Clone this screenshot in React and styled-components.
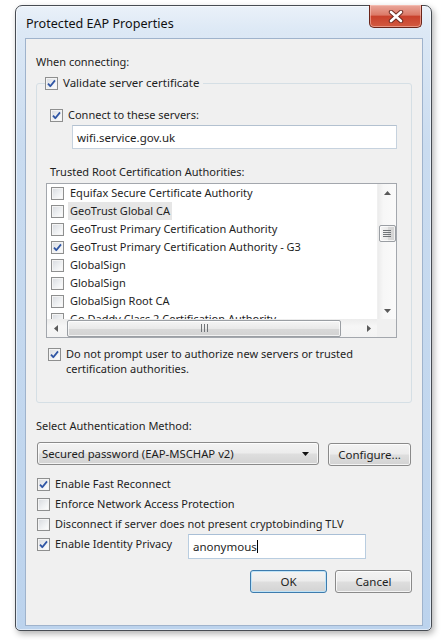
import React from "react";
import styled, { createGlobalStyle } from "styled-components";

const Global = createGlobalStyle`
  html, body { margin: 0; padding: 0; background: #ffffff; }
  body { font-family: "Noto Sans", "Open Sans", sans-serif; font-size: 11px; color: #1e1e1e; }
  * { box-sizing: border-box; }
`;

const Page = styled.div`
  width: 448px;
  height: 640px;
  padding: 5px 0 0 15px;
  overflow: hidden;
`;

const Window = styled.div`
  width: 417px;
  height: 626px;
  border: 1px solid #474c53;
  border-radius: 7px 7px 5px 5px;
  background: linear-gradient(180deg, #eaf1f9 0px, #dce8f5 26px, #cadcf0 140px, #bcd3ed 100%);
  box-shadow: inset 0 0 0 1px rgba(255, 255, 255, 0.55), 2px 3px 6px rgba(0, 0, 0, 0.3);
  display: flex;
  flex-direction: column;
  padding: 0 8px 4px 9px;
`;

const TitleBar = styled.div`
  height: 32px;
  display: flex;
  justify-content: space-between;
  align-items: flex-start;
`;

const Title = styled.div`
  padding: 10px 0 0 1px;
  font-size: 12.6px;
  line-height: 16px;
  color: #111;
`;

const CloseButton = styled.div`
  width: 53px;
  height: 23px;
  margin: -1px 1px 0 0;
  border: 1px solid #6a2419;
  border-top: none;
  border-radius: 0 0 5px 5px;
  background: linear-gradient(180deg, #eaa89c 0%, #dc7a68 45%, #c9412c 52%, #d25a40 100%);
  box-shadow: inset 0 0 0 1px rgba(255, 210, 200, 0.5);
  display: flex;
  align-items: center;
  justify-content: center;
`;

const Client = styled.div`
  flex: 1;
  border: 1px solid #9fb3cc;
  background: #f0f0f0;
  padding: 15px 10px 0 10px;
  display: flex;
  flex-direction: column;
`;

const Label = styled.div`
  line-height: 16px;
  margin: ${(p) => p.$m || "0"};
  white-space: nowrap;
`;

const Group = styled.fieldset`
  margin: 5px 0 0 0;
  border: 1px solid #d5dfe5;
  border-radius: 3px;
  padding: 0 14px 26px 8px;
  min-width: 0;
  display: flex;
  flex-direction: column;
  align-items: flex-start;
`;

const Legend = styled.legend`
  padding: 0 4px 0 0;
  line-height: 16px;
`;

const CheckRow = styled.label`
  display: flex;
  align-items: ${(p) => (p.$top ? "flex-start" : "center")};
  gap: 5px;
  height: ${(p) => (p.$h ? `${p.$h}px` : "auto")};
  line-height: ${(p) => (p.$lh ? `${p.$lh}px` : "16px")};
  margin: ${(p) => p.$m || "0"};
  white-space: nowrap;
  flex-shrink: 0;
`;

const BoxWrap = styled.span`
  width: 13px;
  height: 13px;
  flex: 0 0 13px;
  border: 1px solid #8e8f8f;
  background: linear-gradient(135deg, #d7dadf 0%, #eef0f2 55%, #ffffff 100%);
  box-shadow: inset 0 0 0 1px #f4f4f4;
  display: flex;
  align-items: center;
  justify-content: center;
  margin-top: ${(p) => (p.$mt ? `${p.$mt}px` : "0")};
`;

const Check = ({ checked, mt }) => (
  <BoxWrap $mt={mt}>
    {checked && (
      <svg width="11" height="11" viewBox="0 0 11 11">
        <path d="M2 5.6 L4.3 8.2 L9 2.4" fill="none" stroke="#2f55a4" strokeWidth="1.8" strokeLinejoin="round" />
      </svg>
    )}
  </BoxWrap>
);

const TextInput = styled.div`
  height: ${(p) => p.$h || 24}px;
  width: ${(p) => p.$w}px;
  margin: ${(p) => p.$m || "0"};
  border: 1px solid ${(p) => p.$bc || "#c6d2de"};
  border-top-color: ${(p) => p.$btc || "#b3c1d0"};
  background: #fff;
  display: flex;
  align-items: center;
  padding-left: 4px;
  font-size: 11.5px;
  flex-shrink: 0;
`;

const Caret = styled.span`
  display: inline-block;
  width: 1px;
  height: 13px;
  background: #000;
`;

const List = styled.div`
  margin: 3px 0 0 1px;
  width: 351px;
  height: 155px;
  border: 1px solid #a3a7ad;
  background: #fff;
  display: grid;
  grid-template-columns: 1fr 19px;
  grid-template-rows: 1fr 18px;
  flex-shrink: 0;
`;

const Rows = styled.div`
  overflow: hidden;
  display: flex;
  flex-direction: column;
`;

const Row = styled.div`
  height: 18px;
  flex: 0 0 18px;
  display: flex;
  align-items: center;
  gap: 4px;
  padding-left: 4px;
  white-space: nowrap;
  font-size: 11px;
`;

const RowText = styled.span`
  padding: 1px 2px;
  line-height: 16px;
  background: ${(p) => (p.$sel ? "#e6e6e6" : "transparent")};
`;

const VScroll = styled.div`
  background: linear-gradient(90deg, #ececec 0%, #f7f7f7 30%, #fafafa 100%);
  border-left: 1px solid #f0f0f0;
  display: flex;
  flex-direction: column;
  align-items: center;
`;

const ArrowCell = styled.div`
  width: 100%;
  height: 17px;
  flex: 0 0 17px;
  display: flex;
  align-items: center;
  justify-content: center;
`;

const VTrack = styled.div`
  flex: 1;
  width: 100%;
  display: flex;
  flex-direction: column;
  align-items: center;
`;

const Thumb = styled.div`
  border: 1px solid #9a9ea3;
  border-radius: 2px;
  background: linear-gradient(${(p) => (p.$v ? "90deg" : "180deg")}, #f5f5f5 0%, #e9e9e9 50%, #d9d9d9 51%, #d3d3d3 100%);
  box-shadow: inset 0 0 0 1px rgba(255, 255, 255, 0.7);
  display: flex;
  align-items: center;
  justify-content: center;
`;

const VThumb = styled(Thumb)`
  width: 17px;
  height: 17px;
  margin-top: 24px;
`;

const HScroll = styled.div`
  background: linear-gradient(180deg, #ececec 0%, #f6f6f6 40%, #f3f3f3 100%);
  display: flex;
  align-items: center;
`;

const HArrowCell = styled.div`
  width: 17px;
  height: 100%;
  flex: 0 0 17px;
  display: flex;
  align-items: center;
  justify-content: center;
`;

const HTrack = styled.div`
  flex: 1;
  height: 100%;
  display: flex;
  align-items: center;
`;

const HThumb = styled(Thumb)`
  width: 274px;
  height: 17px;
  margin-left: 3px;
`;

const Corner = styled.div`
  background: #f0f0f0;
`;

const Tri = ({ dir, color = "#5a5a5a" }) => {
  const d = {
    up: "M0 4 L3.5 0 L7 4 Z",
    down: "M0 0 L7 0 L3.5 4 Z",
    left: "M4 0 L4 7 L0 3.5 Z",
    right: "M0 0 L4 3.5 L0 7 Z",
  }[dir];
  const horiz = dir === "left" || dir === "right";
  return (
    <svg width={horiz ? 4 : 7} height={horiz ? 7 : 4} viewBox={horiz ? "0 0 4 7" : "0 0 7 4"}>
      <path d={d} fill={color} />
    </svg>
  );
};

const Grip = ({ v }) =>
  v ? (
    <svg width="8" height="7" viewBox="0 0 8 7">
      {[0.5, 2.5, 4.5, 6.5].map((y) => (
        <line key={y} x1="0" x2="8" y1={y} y2={y} stroke="#707478" strokeWidth="1" />
      ))}
    </svg>
  ) : (
    <svg width="7" height="8" viewBox="0 0 7 8">
      {[0.5, 3.5, 6.5].map((x) => (
        <line key={x} x1={x} x2={x} y1="0" y2="8" stroke="#707478" strokeWidth="1" />
      ))}
    </svg>
  );

const ComboRow = styled.div`
  display: flex;
  align-items: flex-start;
  gap: 9px;
  margin: 8px 1px 0 1px;
`;

const btnGradient = `linear-gradient(180deg, #f3f3f3 0%, #ececec 48%, #dedede 52%, #d3d3d3 100%)`;

const Combo = styled.div`
  width: 282px;
  height: 23px;
  border: 1px solid #8a8a8a;
  border-radius: 3px;
  background: ${btnGradient};
  box-shadow: inset 0 0 0 1px rgba(255, 255, 255, 0.75);
  display: flex;
  align-items: center;
  justify-content: space-between;
  padding: 0 9px 0 4px;
  font-size: 11.3px;
`;

const Button = styled.div`
  width: ${(p) => p.$w || 77}px;
  height: 23px;
  margin-top: ${(p) => p.$mt || 0}px;
  border: 1px solid ${(p) => (p.$default ? "#3d7bad" : "#8a8a8a")};
  border-radius: 3px;
  background: ${btnGradient};
  box-shadow: inset 0 0 0 1px ${(p) => (p.$default ? "#bfe3f7" : "rgba(255,255,255,0.75)")};
  display: flex;
  align-items: center;
  justify-content: center;
  font-size: 11.5px;
`;

const Options = styled.div`
  display: flex;
  flex-direction: column;
  margin: 8px 0 0 1px;
`;

const IdentityRow = styled.div`
  display: flex;
  align-items: flex-start;
`;

const IdentityLabel = styled(CheckRow)`
  width: 151px;
`;

const ButtonRow = styled.div`
  display: flex;
  justify-content: flex-end;
  gap: 8px;
  margin: 11px 0 0 0;
`;

const certs = [
  { name: "Equifax Secure Certificate Authority" },
  { name: "GeoTrust Global CA", sel: true },
  { name: "GeoTrust Primary Certification Authority" },
  { name: "GeoTrust Primary Certification Authority - G3", checked: true },
  { name: "GlobalSign" },
  { name: "GlobalSign" },
  { name: "GlobalSign Root CA" },
  { name: "Go Daddy Class 2 Certification Authority" },
];

export default function App() {
  return (
    <>
      <Global />
      <Page>
        <Window>
          <TitleBar>
            <Title>Protected EAP Properties</Title>
            <CloseButton>
              <svg width="16" height="13" viewBox="0 0 16 13">
                <path d="M3 2 L13 11 M13 2 L3 11" stroke="#6b2a20" strokeWidth="4.4" strokeLinecap="round" />
                <path d="M3 2 L13 11 M13 2 L3 11" stroke="#ffffff" strokeWidth="2.6" strokeLinecap="round" />
              </svg>
            </CloseButton>
          </TitleBar>
          <Client>
            <Label>When connecting:</Label>
            <Group>
              <Legend>
                <CheckRow>
                  <Check checked />
                  <span style={{ fontSize: "11.5px" }}>Validate server certificate</span>
                </CheckRow>
              </Legend>
              <CheckRow $m="16px 0 0 5px">
                <Check checked />
                <span>Connect to these servers:</span>
              </CheckRow>
              <TextInput $w={325} $m="2px 0 0 27px">wifi.service.gov.uk</TextInput>
              <Label $m="15px 0 0 5px">Trusted Root Certification Authorities:</Label>
              <List>
                <Rows>
                  {certs.map((c, i) => (
                    <Row key={i}>
                      <Check checked={c.checked} />
                      <RowText $sel={c.sel}>{c.name}</RowText>
                    </Row>
                  ))}
                </Rows>
                <VScroll>
                  <ArrowCell>
                    <Tri dir="up" />
                  </ArrowCell>
                  <VTrack>
                    <VThumb $v>
                      <Grip v />
                    </VThumb>
                  </VTrack>
                  <ArrowCell>
                    <Tri dir="down" />
                  </ArrowCell>
                </VScroll>
                <HScroll>
                  <HArrowCell>
                    <Tri dir="left" />
                  </HArrowCell>
                  <HTrack>
                    <HThumb>
                      <Grip />
                    </HThumb>
                  </HTrack>
                  <HArrowCell>
                    <Tri dir="right" />
                  </HArrowCell>
                </HScroll>
                <Corner />
              </List>
              <CheckRow $top $lh={15} $m="8px 0 0 3px">
                <Check checked mt={2} />
                <span>
                  Do not prompt user to authorize new servers or trusted
                  <br />
                  certification authorities.
                </span>
              </CheckRow>
            </Group>
            <Label $m="15px 0 0 0">Select Authentication Method:</Label>
            <ComboRow>
              <Combo>
                <span>Secured password (EAP-MSCHAP v2)</span>
                <Tri dir="down" color="#111" />
              </Combo>
              <Button $w={83} $mt={1}>Configure...</Button>
            </ComboRow>
            <Options>
              <CheckRow $h={20}>
                <Check checked />
                <span>Enable Fast Reconnect</span>
              </CheckRow>
              <CheckRow $h={20}>
                <Check />
                <span>Enforce Network Access Protection</span>
              </CheckRow>
              <CheckRow $h={20}>
                <Check />
                <span>Disconnect if server does not present cryptobinding TLV</span>
              </CheckRow>
              <IdentityRow>
                <IdentityLabel $h={20}>
                  <Check checked />
                  <span>Enable Identity Privacy</span>
                </IdentityLabel>
                <TextInput $w={178} $h={25} $bc="#b9cde0" $btc="#a9bfd6">
                  anonymous
                  <Caret />
                </TextInput>
              </IdentityRow>
            </Options>
            <ButtonRow>
              <Button $default>OK</Button>
              <Button>Cancel</Button>
            </ButtonRow>
          </Client>
        </Window>
      </Page>
    </>
  );
}
